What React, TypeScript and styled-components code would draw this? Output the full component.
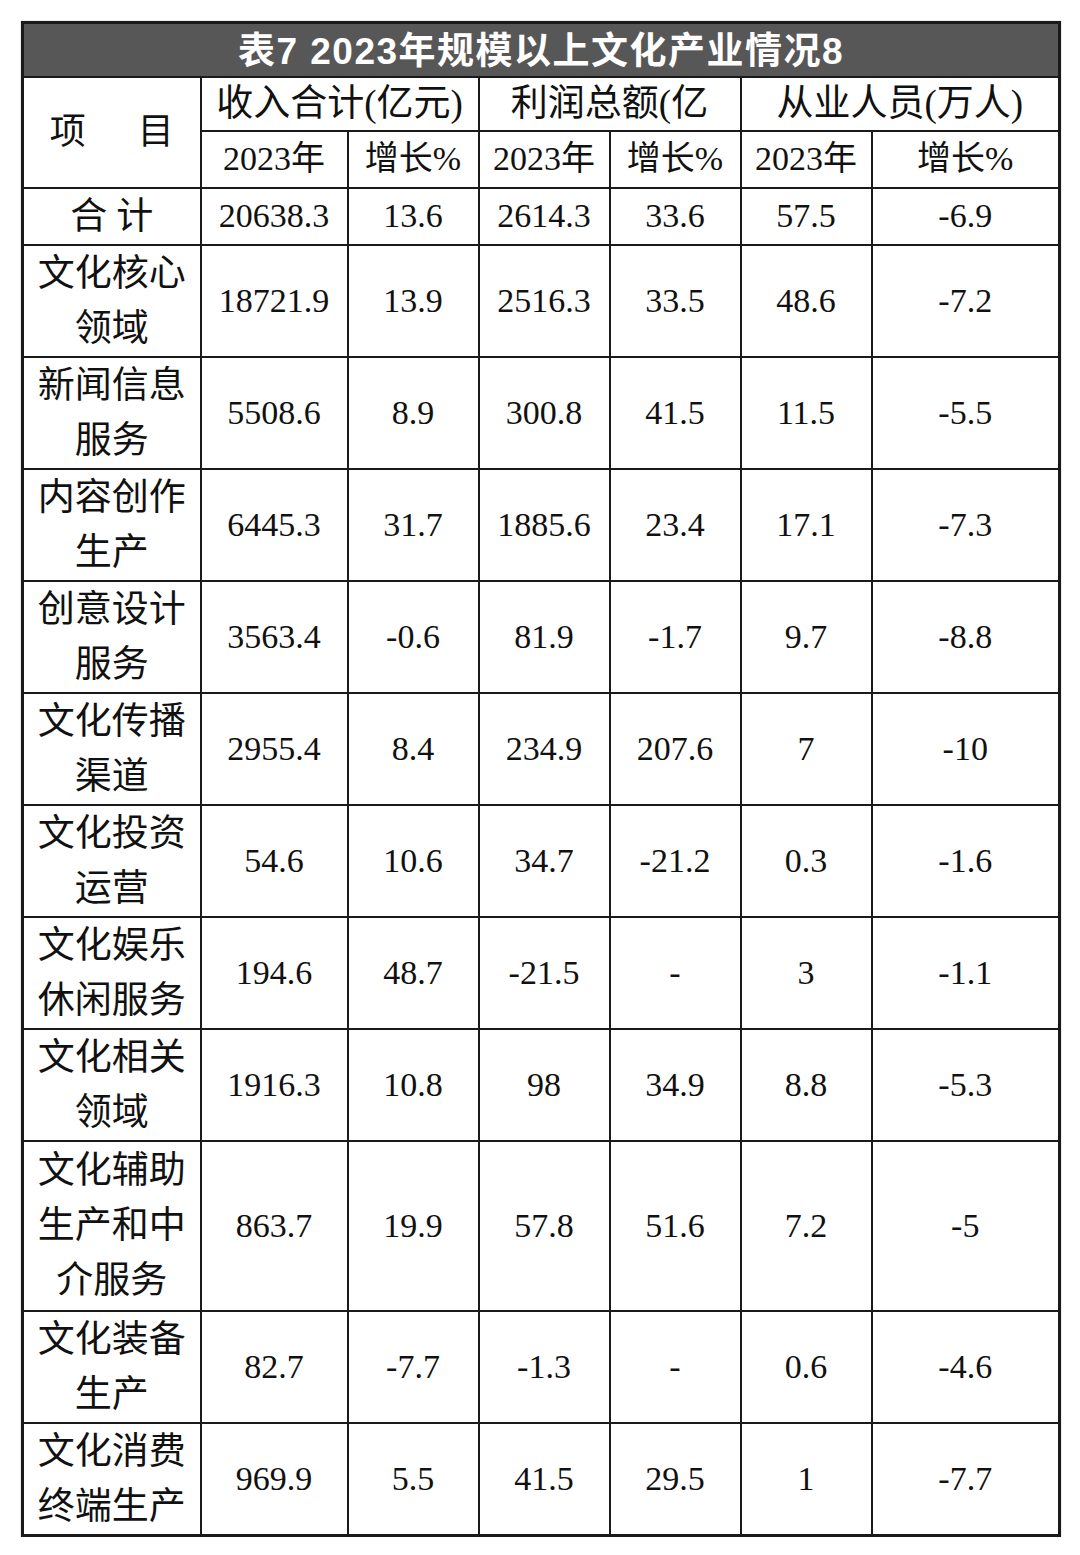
import { styled, createGlobalStyle } from 'styled-components'

const GlobalStyle = createGlobalStyle`
  html, body {
    margin: 0;
    padding: 0;
    background: #fff;
  }
  body {
    font-family: "Liberation Serif", "Noto Sans CJK SC", serif;
    color: #111;
  }
`

type Item = {
  label: string[]
  values: string[]
  height?: number
}

const items: Item[] = [
  { label: ['合 计'], values: ['20638.3', '13.6', '2614.3', '33.6', '57.5', '-6.9'] },
  { label: ['文化核心', '领域'], values: ['18721.9', '13.9', '2516.3', '33.5', '48.6', '-7.2'] },
  { label: ['新闻信息', '服务'], values: ['5508.6', '8.9', '300.8', '41.5', '11.5', '-5.5'] },
  { label: ['内容创作', '生产'], values: ['6445.3', '31.7', '1885.6', '23.4', '17.1', '-7.3'] },
  { label: ['创意设计', '服务'], values: ['3563.4', '-0.6', '81.9', '-1.7', '9.7', '-8.8'] },
  { label: ['文化传播', '渠道'], values: ['2955.4', '8.4', '234.9', '207.6', '7', '-10'] },
  { label: ['文化投资', '运营'], values: ['54.6', '10.6', '34.7', '-21.2', '0.3', '-1.6'] },
  { label: ['文化娱乐', '休闲服务'], values: ['194.6', '48.7', '-21.5', '-', '3', '-1.1'] },
  { label: ['文化相关', '领域'], values: ['1916.3', '10.8', '98', '34.9', '8.8', '-5.3'], height: 111 },
  { label: ['文化辅助', '生产和中', '介服务'], values: ['863.7', '19.9', '57.8', '51.6', '7.2', '-5'] },
  { label: ['文化装备', '生产'], values: ['82.7', '-7.7', '-1.3', '-', '0.6', '-4.6'], height: 111 },
  { label: ['文化消费', '终端生产'], values: ['969.9', '5.5', '41.5', '29.5', '1', '-7.7'] },
]

const rowHeight = (item: Item) => {
  if (item.height) return item.height
  const lines = item.label.length
  return lines === 1 ? 57 : lines === 2 ? 112 : 170
}

const widths = [178, 147, 131, 131, 131, 131, 188]

export default function App () {
  return (
    <>
      <GlobalStyle />
      <Wrap>
        <Sheet>
          <colgroup>
            {widths.map((w, i) => (
              <col key={i} style={{ width: w }} />
            ))}
          </colgroup>
          <thead>
            <Row $h={54}>
              <TitleCell colSpan={7}>表7 2023年规模以上文化产业情况8</TitleCell>
            </Row>
            <Row $h={54}>
              <HeadCell rowSpan={2}>
                <Spread>
                  <span>项</span>
                  <span>目</span>
                </Spread>
              </HeadCell>
              <GroupCell colSpan={2}>收入合计(亿元)</GroupCell>
              <GroupCell colSpan={2}>利润总额(亿</GroupCell>
              <GroupCell colSpan={2}>从业人员(万人)</GroupCell>
            </Row>
            <Row $h={57}>
              {[0, 1, 2].map((i) => (
                <Pair key={i}>
                  <HeadCell>2023年</HeadCell>
                  <HeadCell>增长%</HeadCell>
                </Pair>
              ))}
            </Row>
          </thead>
          <tbody>
            {items.map((item) => (
              <Row key={item.label.join('')} $h={rowHeight(item)}>
                <LabelCell>
                  {item.label.map((line) => (
                    <Line key={line}>{line}</Line>
                  ))}
                </LabelCell>
                {item.values.map((v, i) => (
                  <NumCell key={i}>{v}</NumCell>
                ))}
              </Row>
            ))}
          </tbody>
        </Sheet>
      </Wrap>
    </>
  )
}

function Pair ({ children }: { children: React.ReactNode }) {
  return <>{children}</>
}

const Wrap = styled.div`
  padding: 21px 0 0 21px;
`

const Sheet = styled.table`
  width: 1038px;
  table-layout: fixed;
  border-collapse: collapse;
  border: 3px solid #1a1a1a;
  box-shadow: 0 0 1px #888;
`

const Row = styled.tr<{ $h: number }>`
  height: ${(p) => p.$h}px;
`

const TitleCell = styled.th`
  background: #575757;
  color: #fff;
  font-family: "Liberation Sans", "Noto Sans CJK SC", sans-serif;
  font-weight: 700;
  font-size: 37px;
  line-height: 1;
  letter-spacing: 1.5px;
  text-align: center;
  padding: 3px 0 0;
  border: 2px solid #1a1a1a;
  white-space: nowrap;
  overflow: hidden;
`

const HeadCell = styled.th`
  font-weight: 400;
  font-size: 34px;
  line-height: 1;
  text-align: center;
  padding: 0;
  border: 2px solid #1a1a1a;
  white-space: nowrap;
  overflow: hidden;
`

const GroupCell = styled(HeadCell)`
  font-size: 37px;
`

const Spread = styled.div`
  display: flex;
  justify-content: center;
  gap: 52px;
  font-size: 36px;
`

const LabelCell = styled.td`
  font-size: 37px;
  line-height: 55px;
  text-align: center;
  padding: 0;
  border: 2px solid #1a1a1a;
  white-space: nowrap;
`

const Line = styled.div`
  display: block;
`

const NumCell = styled.td`
  font-size: 34px;
  line-height: 1;
  text-align: center;
  padding: 0;
  border: 2px solid #1a1a1a;
  white-space: nowrap;
`
